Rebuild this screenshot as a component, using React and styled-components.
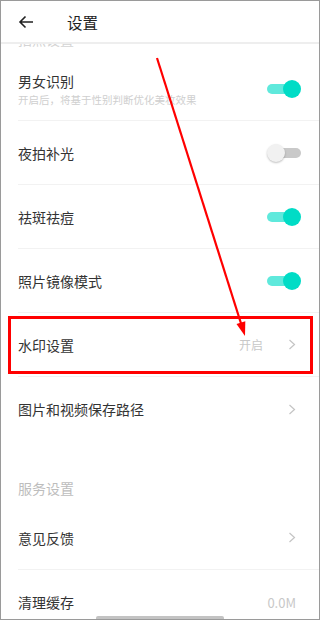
import React from "react"
import styled, { createGlobalStyle } from "styled-components"

const GlobalStyle = createGlobalStyle`
  html, body {
    margin: 0;
    padding: 0;
    background: #fff;
  }
  body {
    font-family: "Noto Sans CJK SC", "Noto Sans", sans-serif;
  }
`

const Frame = styled.div`
  position: relative;
  width: 320px;
  height: 620px;
  box-sizing: border-box;
  border: 1px solid #9a9a9a;
  overflow: hidden;
  display: flex;
  flex-direction: column;
  background: #fff;
`

const Header = styled.header`
  height: 41px;
  flex-shrink: 0;
  display: flex;
  align-items: center;
  padding-left: 17px;
  border-bottom: 2px solid #eeeeee;
  position: relative;
  z-index: 1;
  background: #fff;
`

const Title = styled.h1`
  margin: 0 0 0 33px;
  font-size: 15.5px;
  font-weight: 400;
  color: #222;
`

const Body = styled.main`
  flex: 1;
  overflow: hidden;
`

const List = styled.div`
  margin-top: -52px;
`

const SectionTitle = styled.div`
  height: 65px;
  box-sizing: border-box;
  display: flex;
  align-items: flex-end;
  padding: 0 0 8px 17px;
  font-size: 14px;
  color: ${(p) => (p.$faded ? "#d4d4d4" : "#bdbdbd")};
`

const Row = styled.div`
  height: 64px;
  box-sizing: border-box;
  margin-left: 17px;
  padding-right: ${(p) => p.$pad ?? 23}px;
  display: flex;
  align-items: center;
  justify-content: space-between;
  border-bottom: ${(p) => (p.$last ? "none" : "1px solid #f2f2f2")};
`

const Labels = styled.div`
  display: flex;
  flex-direction: column;
`

const Label = styled.span`
  font-size: 14px;
  color: #333;
  line-height: 20px;
`

const Hint = styled.span`
  font-size: 10.5px;
  color: #cfcfcf;
  line-height: 15px;
  margin-top: 1px;
`

const Trail = styled.div`
  display: flex;
  align-items: center;
  gap: 25px;
`

const Value = styled.span`
  font-size: ${(p) => p.$size || 12}px;
  color: #c8c8c8;
`

const Switch = styled.div`
  position: relative;
  width: 34px;
  height: 18px;

  &::before {
    content: "";
    position: absolute;
    left: ${(p) => (p.$on ? 0 : 8)}px;
    top: 4px;
    width: 26px;
    height: 10px;
    border-radius: 5px;
    background: ${(p) => (p.$on ? "#5fe9dc" : "#c9c9c9")};
  }

  &::after {
    content: "";
    position: absolute;
    left: ${(p) => (p.$on ? 16 : 0)}px;
    top: 0;
    width: 18px;
    height: 18px;
    border-radius: 50%;
    background: ${(p) => (p.$on ? "#00dcc6" : "#f1f1f1")};
    box-shadow: ${(p) => (p.$on ? "none" : "0 1px 2px rgba(0,0,0,0.25)")};
  }
`

const Highlight = styled.div`
  flex: 1;
  margin-left: -10px;
  border: 3px solid #ff0000;
  padding: 0 14px 0 7px;
  height: 58px;
  box-sizing: border-box;
  display: flex;
  align-items: center;
  justify-content: space-between;
`

const HomeBar = styled.div`
  position: absolute;
  left: 95px;
  bottom: 0;
  width: 128px;
  height: 3px;
  border-radius: 2px 2px 0 0;
  background: #c3c3c3;
`

const Overlay = styled.svg`
  position: absolute;
  left: -1px;
  top: -1px;
  pointer-events: none;
  z-index: 2;
`

const BackArrow = () => (
  <svg width="16" height="14" viewBox="0 0 16 14" fill="none">
    <path d="M15 7H2M7.5 1.5L2 7l5.5 5.5" stroke="#222" strokeWidth="1.6" />
  </svg>
)

const Chevron = () => (
  <svg width="8" height="11" viewBox="0 0 8 11" fill="none">
    <path d="M1.5 1l5 4.5-5 4.5" stroke="#c4c4c4" strokeWidth="1.2" />
  </svg>
)

const toggles = [
  { label: "夜拍补光", on: false },
  { label: "祛斑祛痘", on: true },
  { label: "照片镜像模式", on: true },
]

const App = () => {
  return (
    <>
      <GlobalStyle />
      <Frame>
        <Header>
          <BackArrow />
          <Title>设置</Title>
        </Header>
        <Body>
          <List>
            <SectionTitle $faded>拍照设置</SectionTitle>
            <Row $pad={18}>
              <Labels>
                <Label>男女识别</Label>
                <Hint>开启后，将基于性别判断优化美妆效果</Hint>
              </Labels>
              <Switch $on />
            </Row>
            {toggles.map((t) => (
              <Row key={t.label} $pad={18}>
                <Label>{t.label}</Label>
                <Switch $on={t.on} />
              </Row>
            ))}
            <Row $pad={6}>
              <Highlight>
                <Label>水印设置</Label>
                <Trail>
                  <Value>开启</Value>
                  <Chevron />
                </Trail>
              </Highlight>
            </Row>
            <Row $last>
              <Label>图片和视频保存路径</Label>
              <Chevron />
            </Row>
            <SectionTitle>服务设置</SectionTitle>
            <Row>
              <Label>意见反馈</Label>
              <Chevron />
            </Row>
            <Row $last>
              <Label>清理缓存</Label>
              <Value $size={13}>0.0M</Value>
            </Row>
          </List>
        </Body>
        <HomeBar />
        <Overlay width="320" height="620" viewBox="0 0 320 620">
          <line x1="157" y1="58" x2="241.5" y2="325" stroke="#ff0000" strokeWidth="2.2" />
          <polygon points="245,336 236.5,324 245.3,321.3" fill="#ff0000" />
        </Overlay>
      </Frame>
    </>
  )
}

export default App
